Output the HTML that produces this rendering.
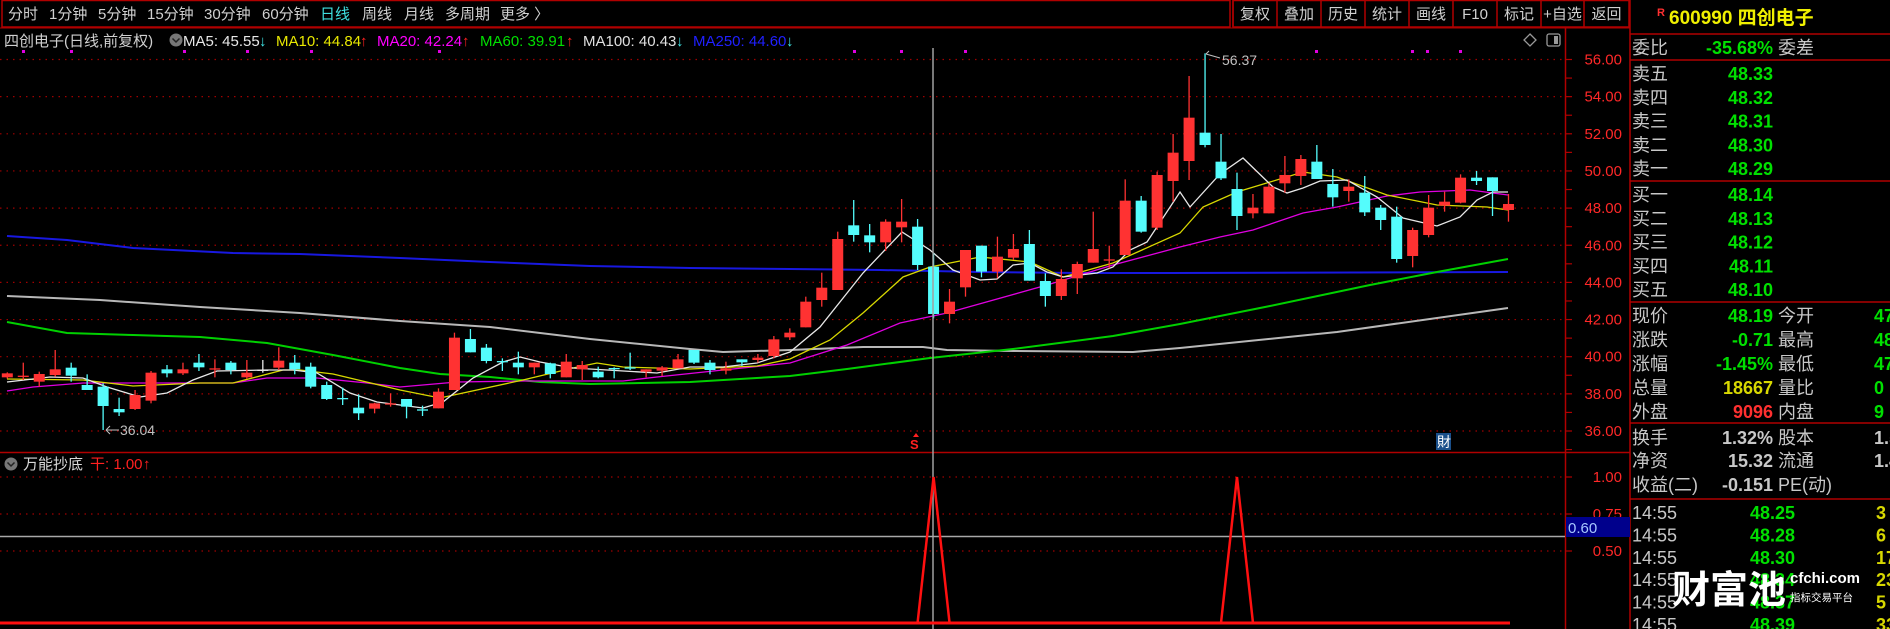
<!DOCTYPE html>
<html><head><meta charset="utf-8">
<style>
html,body{margin:0;padding:0;background:#000;width:1890px;height:629px;overflow:hidden}
svg{display:block}
text{font-family:"Liberation Sans","Noto Sans CJK SC",sans-serif}
</style></head><body>
<svg id="s" width="1890" height="629" xmlns="http://www.w3.org/2000/svg">
<rect width="1890" height="629" fill="#000"/>
<!-- toolbar -->
<rect x="2" y="0.5" width="1228" height="26.5" fill="none" stroke="#b00000" stroke-width="1.5"/>
<g font-size="15" fill="#d0d0d0">
<text x="8" y="19">分时</text><text x="49" y="19">1分钟</text><text x="98" y="19">5分钟</text>
<text x="147" y="19">15分钟</text><text x="204" y="19">30分钟</text><text x="262" y="19">60分钟</text>
<text x="320" y="19" fill="#40e0e0">日线</text><text x="362" y="19">周线</text><text x="404" y="19">月线</text>
<text x="445" y="19">多周期</text><text x="500" y="19">更多 〉</text>
</g>
<g id="btns"></g>
<line x1="0" y1="28" x2="1630" y2="28" stroke="#b00000" stroke-width="1"/>
<!-- title -->
<g font-size="15">
<text x="4" y="46" fill="#d0d0d0">四创电子(日线,前复权)</text>
<circle cx="176" cy="40" r="6.5" fill="#777"/><path d="M172.5 38.5 L176 42 L179.5 38.5" stroke="#222" stroke-width="1.5" fill="none"/>
<text x="183" y="46" fill="#e8e8e8">MA5: 45.55</text><text x="259" y="46" fill="#40e8e8">↓</text>
<text x="276" y="46" fill="#e8e800">MA10: 44.84</text><text x="360" y="46" fill="#ff2020">↑</text>
<text x="377" y="46" fill="#ff00ff">MA20: 42.24</text><text x="462" y="46" fill="#ff2020">↑</text>
<text x="480" y="46" fill="#00e000">MA60: 39.91</text><text x="566" y="46" fill="#ff2020">↑</text>
<text x="583" y="46" fill="#e0e0e0">MA100: 40.43</text><text x="676" y="46" fill="#40e8e8">↓</text>
<text x="693" y="46" fill="#2020ff">MA250: 44.60</text><text x="786" y="46" fill="#40e8e8">↓</text>
</g>
<path d="M1530 34 L1536 40 L1530 46 L1524 40 Z" fill="none" stroke="#999" stroke-width="1.3"/>
<rect x="1547" y="34" width="13" height="12" rx="2" fill="none" stroke="#999" stroke-width="1.3"/><rect x="1554" y="36" width="4" height="8" fill="#999"/>
<g id="grid"></g>
<g id="mas"></g>
<g id="cand"></g>
<!-- axes -->
<line x1="1565.5" y1="28" x2="1565.5" y2="629" stroke="#b00000" stroke-width="1.5"/>
<line x1="0" y1="452.5" x2="1630" y2="452.5" stroke="#b00000" stroke-width="1.5"/>
<line x1="1630" y1="0" x2="1630" y2="629" stroke="#b00000" stroke-width="1.5"/>
<g id="axis" font-size="15" fill="#ff2828" text-anchor="end"></g>
<!-- crosshair -->
<line x1="933" y1="48" x2="933" y2="629" stroke="#a0a0a0" stroke-width="1.5"/>
<text x="910" y="449" font-size="13" fill="#ff2020" font-weight="bold">S</text>
<path d="M913 437 L916 433 L919 437 Z" fill="#ff2020"/>
<rect x="1436" y="433" width="15" height="17" fill="#1a4f8a"/><text x="1437" y="447" font-size="14" fill="#fff">財</text>
<text x="1222" y="65" font-size="14" fill="#c0c0c0">56.37</text>
<path d="M1206 54 L1220 58 M1206 54 L1209 51" stroke="#c0c0c0" fill="none"/>
<text x="120" y="435" font-size="14" fill="#c0c0c0">36.04</text>
<path d="M106 430 L119 430 M106 430 L110 426 M106 430 L110 434" stroke="#c0c0c0" fill="none"/>
<!-- indicator -->
<circle cx="11" cy="464" r="6.5" fill="#777"/><path d="M7.5 462.5 L11 466 L14.5 462.5" stroke="#222" stroke-width="1.5" fill="none"/>
<text x="23" y="469" font-size="15" fill="#d8d8d8">万能抄底</text>
<text x="90" y="469" font-size="15" fill="#ff2020">干: 1.00</text><text x="143" y="469" font-size="15" fill="#ff2020">↑</text>
<g id="ind"></g>
<!-- right panel -->
<g id="rp"></g>
<text x="1657" y="16" font-size="11" font-weight="bold" fill="#ff3030">R</text>
<text x="1669" y="24" font-size="19" fill="#f0f000" font-weight="bold">600990 四创电子</text>
<!-- watermark -->
<text x="1672" y="603" font-size="38" font-weight="bold" fill="#fff" font-family="'Noto Sans CJK SC',sans-serif">财富池</text>
<text x="1790" y="583" font-size="15" fill="#fff" font-weight="bold">cfchi.com</text>
<text x="1790" y="601" font-size="10.5" fill="#fff" font-family="'Noto Sans CJK SC',sans-serif">指标交易平台</text>
</svg>
<script>
var NS="http://www.w3.org/2000/svg",S=document.getElementById('s');
function el(p,t,a,txt){var e=document.createElementNS(NS,t);for(var k in a)e.setAttribute(k,a[k]);if(txt!==undefined)e.textContent=txt;document.getElementById(p).appendChild(e);return e;}
// buttons
var bx=[1233,1277,1321,1365,1409,1453,1497,1541,1584,1629],bl=["复权","叠加","历史","统计","画线","F10","标记","+自选","返回"];
el('btns','rect',{x:1233,y:0.5,width:396,height:26.5,fill:'none',stroke:'#b00000','stroke-width':1.5});
for(var i=0;i<9;i++){el('btns','line',{x1:bx[i],y1:0,x2:bx[i],y2:27,stroke:'#b00000','stroke-width':1.5});
el('btns','text',{x:(bx[i]+bx[i+1])/2,y:19,'font-size':15,fill:'#d0d0d0','text-anchor':'middle'},bl[i]);}
// grid & axis
for(var k=0;k<=10;k++){var y=59.5+k*37.15;
el('grid','line',{x1:0,y1:y,x2:1565,y2:y,stroke:'#a00000','stroke-width':1.2,'stroke-dasharray':'1.5,5'});
el('axis','text',{x:1622,y:y+5},(56-2*k).toFixed(2));}
for(var k=0;k<=21;k++){var y=59.5+k*18.575;if(y>450)break;el('axis','line',{x1:1565,y1:y,x2:1572,y2:y,stroke:'#b00000','stroke-width':1.2});}
// dots
[23,71,184,247,311,439,854,901,965,1316,1412,1427,1460].forEach(function(x){el('grid','rect',{x:x-1,y:50,width:3,height:3,fill:'#e000e0'});});
// indicator grid
[[477,'1.00'],[514,'0.75'],[551,'0.50']].forEach(function(a){
el('ind','line',{x1:0,y1:a[0],x2:1565,y2:a[0],stroke:'#a00000','stroke-width':1.2,'stroke-dasharray':'1.5,5'});
el('ind','line',{x1:1565,y1:a[0],x2:1572,y2:a[0],stroke:'#b00000','stroke-width':1.2});
el('ind','text',{x:1622,y:a[0]+5,'font-size':15,fill:'#ff2828','text-anchor':'end'},a[1]);});
el('ind','line',{x1:0,y1:536.5,x2:1565,y2:536.5,stroke:'#a8a8a8','stroke-width':1.5});
el('ind','rect',{x:1566,y:517,width:64,height:20,fill:'#00008c'});
el('ind','text',{x:1568,y:533,'font-size':15,fill:'#a8c8ff'},'0.60');
var X=function(i){return 7.3+15.97*i;};
var x1=X(58),x2=X(77);
el('ind','path',{d:'M0 623 L'+(x1-16)+' 623 L'+x1+' 477 L'+(x1+16)+' 623 L'+(x2-16)+' 623 L'+x2+' 477 L'+(x2+16)+' 623 L1508 623',stroke:'#ff1010','stroke-width':2.5,fill:'none'});
el('ind','line',{x1:0,y1:623,x2:1510,y2:623,stroke:'#ff1010','stroke-width':3});
// candles [color, top, bot, hi, lo] zoom coords
var C=[['R',1000,1012,997,1016],['R',1007,1009,968,1020],['R',1002,1025,995,1040],['R',988,1005,930,1010],['C',983,1007,968,1025],['C',1035,1050,1003,1050],['C',1040,1098,1030,1170],['C',1107,1117,1073,1128],['R',1065,1107,1050,1110],['R',998,1082,993,1090],
['C',988,1000,975,1012],['R',988,1000,968,1005],['C',968,982,942,993],['R',985,988,958,1012],['C',968,990,963,1003],['R',998,1012,960,1017],['W',989,991,960,998],['R',962,983,922,990],['C',968,988,945,1003],['C',980,1040,968,1045],
['C',1035,1077,1025,1080],['C',1074,1077,1043,1095],['C',1103,1120,1063,1140],['R',1090,1106,1088,1120],['R',1090,1093,1060,1100],['C',1077,1100,1077,1135],['C',1108,1112,1097,1128],['R',1055,1105,1045,1105],['R',893,1050,878,1050],['C',897,937,867,937],
['C',923,963,912,970],['C',963,967,955,993],['C',968,982,935,1003],['R',968,982,968,1003],['C',970,1002,968,1015],['R',965,1012,942,1012],['R',975,988,963,1020],['C',995,1012,980,1015],['C',984,987,982,1015],['C',982,985,938,990],
['R',988,995,988,1012],['R',982,992,978,1008],['R',958,985,942,985],['C',930,968,930,972],['C',968,990,960,1003],['R',985,992,965,1003],['C',958,967,958,978],['R',953,960,942,968],['R',898,948,888,955],['R',878,892,865,900],
['R',785,862,770,862],['R',743,780,698,800],['R',597,750,575,750],['C',556,585,480,605],['C',586,607,552,637],['R',545,607,538,633],['R',545,562,477,607],['C',560,675,537,690],['C',680,822,640,835],['R',785,822,747,850],
['R',630,742,630,770],['C',617,695,617,712],['R',650,695,590,715],['R',627,653,582,660],['C',612,722,570,722],['C',723,768,700,800],['R',717,768,688,780],['R',672,715,665,762],['R',627,668,515,668],['R',658,661,617,685],
['R',482,645,418,645],['C',482,575,468,578],['R',405,563,395,570],['R',338,423,282,485],['R',233,363,108,420],['C',278,315,40,322],['C',365,415,282,420],['C',447,528,398,570],['R',503,520,462,535],['R',440,520,430,520],
['R',405,430,348,458],['R',357,408,345,435],['C',365,417,315,417],['C',432,472,387,500],['R',440,453,418,485],['C',458,517,408,528],['C',503,540,495,570],['C',530,657,500,668],['R',570,648,563,682],['R',503,585,465,592],
['R',485,497,455,515],['R',413,488,403,490],['C',413,423,393,435],['C',412,453,412,528],['R',492,510,462,545]];
C.forEach(function(c,i){var x=X(i),col=c[0]=='R'?'#ff3232':(c[0]=='W'?'#e8e8e8':'#54fcfc');
var t=c[1]/3+40,b=c[2]/3+40,h=c[3]/3+40,l=c[4]/3+40;
el('cand','line',{x1:x,y1:h,x2:x,y2:l,stroke:col,'stroke-width':1.3});
var hh=Math.max(b-t,1.3);el('cand','rect',{x:x-5.5,y:t,width:11,height:hh,fill:col});});
// MAs
var M={
'#1818e0':[[7,236],[67,240],[133,248],[233,253],[300,254],[400,258],[490,262],[590,266],[690,268],[790,269],[880,270],[980,272],[1080,273],[1170,273],[1508,272]],
'#b8b8b8':[[7,296],[100,300],[200,307],[300,313],[400,321],[490,327],[590,339],[690,349],[723,352],[790,350],[863,347],[923,347],[947,350],[1013,351],[1133,352],[1180,348],[1337,332],[1508,308]],
'#00d000':[[7,322],[67,333],[133,335],[200,337],[267,343],[333,355],[400,368],[440,374],[490,377],[540,382],[590,384],[690,382],[790,376],[847,369],[930,358],[1013,349],[1113,336],[1180,324],[1270,306],[1370,285],[1437,272],[1508,259]],
'#e000e0':[[7,391],[33,387],[83,383],[167,383],[233,383],[267,378],[317,378],[367,383],[400,387],[457,382],[523,381],[623,381],[657,377],[723,370],[790,363],[847,345],[900,323],[947,313],[1047,285],[1080,275],[1113,265],[1180,247],[1220,237],[1253,230],[1303,213],[1337,207],[1387,196],[1420,192],[1470,190],[1508,195]],
'#d8d800':[[7,379],[83,380],[133,386],[200,383],[233,383],[283,370],[300,370],[333,374],[400,390],[440,398],[523,380],[573,368],[597,363],[623,367],[690,369],[757,366],[790,359],[830,340],[863,313],[903,277],[930,267],[980,257],[1030,262],[1063,277],[1113,263],[1180,233],[1203,207],[1237,192],[1270,182],[1303,172],[1337,177],[1387,195],[1437,205],[1487,207],[1508,210]],
'#e8e8e8':[[7,382],[50,377],[83,378],[107,387],[140,397],[167,393],[193,380],[217,371],[267,370],[293,370],[317,373],[350,393],[377,402],[400,405],[423,408],[443,402],[473,378],[503,362],[520,357],[540,362],[573,368],[607,370],[657,373],[690,367],[723,367],[757,363],[790,352],[820,327],[863,273],[902,232],[930,250],[953,270],[980,280],[997,279],[1013,265],[1030,263],[1047,272],[1063,277],[1097,273],[1113,267],[1130,250],[1147,242],[1180,192],[1190,207],[1220,174],[1243,158],[1273,187],[1287,193],[1303,188],[1320,181],[1347,180],[1377,197],[1403,218],[1437,226],[1460,217],[1477,200],[1493,192],[1508,192]]};
for(var c in M){el('mas','polyline',{points:M[c].map(function(p){return p.join(',')}).join(' '),fill:'none',stroke:c,'stroke-width':(c=='#1818e0'||c=='#b8b8b8'||c=='#00d000')?2:1.3});}
// right panel
var G='#00e000',W='#c8c8c8',Y='#d8d800',R='#ff3030';
function rl(y){el('rp','line',{x1:1630,y1:y,x2:1890,y2:y,stroke:'#b00000','stroke-width':1.5});}
[34,60,181,302,423,499].forEach(rl);
function row(y,lab,v,vc,l2,v2,v2c){el('rp','text',{x:1632,y:y+7,'font-size':18,fill:W},lab);
el('rp','text',{x:1773,y:y+7,'font-size':18,fill:vc,'text-anchor':'end','font-weight':'bold'},v);
if(l2)el('rp','text',{x:1778,y:y+7,'font-size':18,fill:W},l2);
if(v2)el('rp','text',{x:1874,y:y+7,'font-size':18,fill:v2c,'font-weight':'bold'},v2);}
row(47,'委比','-35.68%',G,'委差');
[['卖五','48.33'],['卖四','48.32'],['卖三','48.31'],['卖二','48.30'],['卖一','48.29']].forEach(function(a,i){row(73+i*23.8,a[0],a[1],G);});
[['买一','48.14'],['买二','48.13'],['买三','48.12'],['买四','48.11'],['买五','48.10']].forEach(function(a,i){row(194+i*23.8,a[0],a[1],G);});
row(315,'现价','48.19',G,'今开','47',G);row(339,'涨跌','-0.71',G,'最高','48',G);row(363,'涨幅','-1.45%',G,'最低','47',G);
row(387,'总量','18667',Y,'量比','0',G);row(411,'外盘','9096',R,'内盘','9',G);
row(437,'换手','1.32%',W,'股本','1.5',W);row(460,'净资','15.32',W,'流通','1.4',W);row(484,'收益(二)','-0.151',W,'PE(动)');
[['48.25','3'],['48.28','6'],['48.30','17'],['48.34','23'],['48.37','5'],['48.39','33']].forEach(function(a,i){var y=512+i*22.4;
el('rp','text',{x:1632,y:y+7,'font-size':18,fill:W},'14:55');
el('rp','text',{x:1795,y:y+7,'font-size':18,fill:G,'text-anchor':'end','font-weight':'bold'},a[0]);
el('rp','text',{x:1876,y:y+7,'font-size':18,fill:Y,'font-weight':'bold'},a[1]);});
</script>
</body></html>
